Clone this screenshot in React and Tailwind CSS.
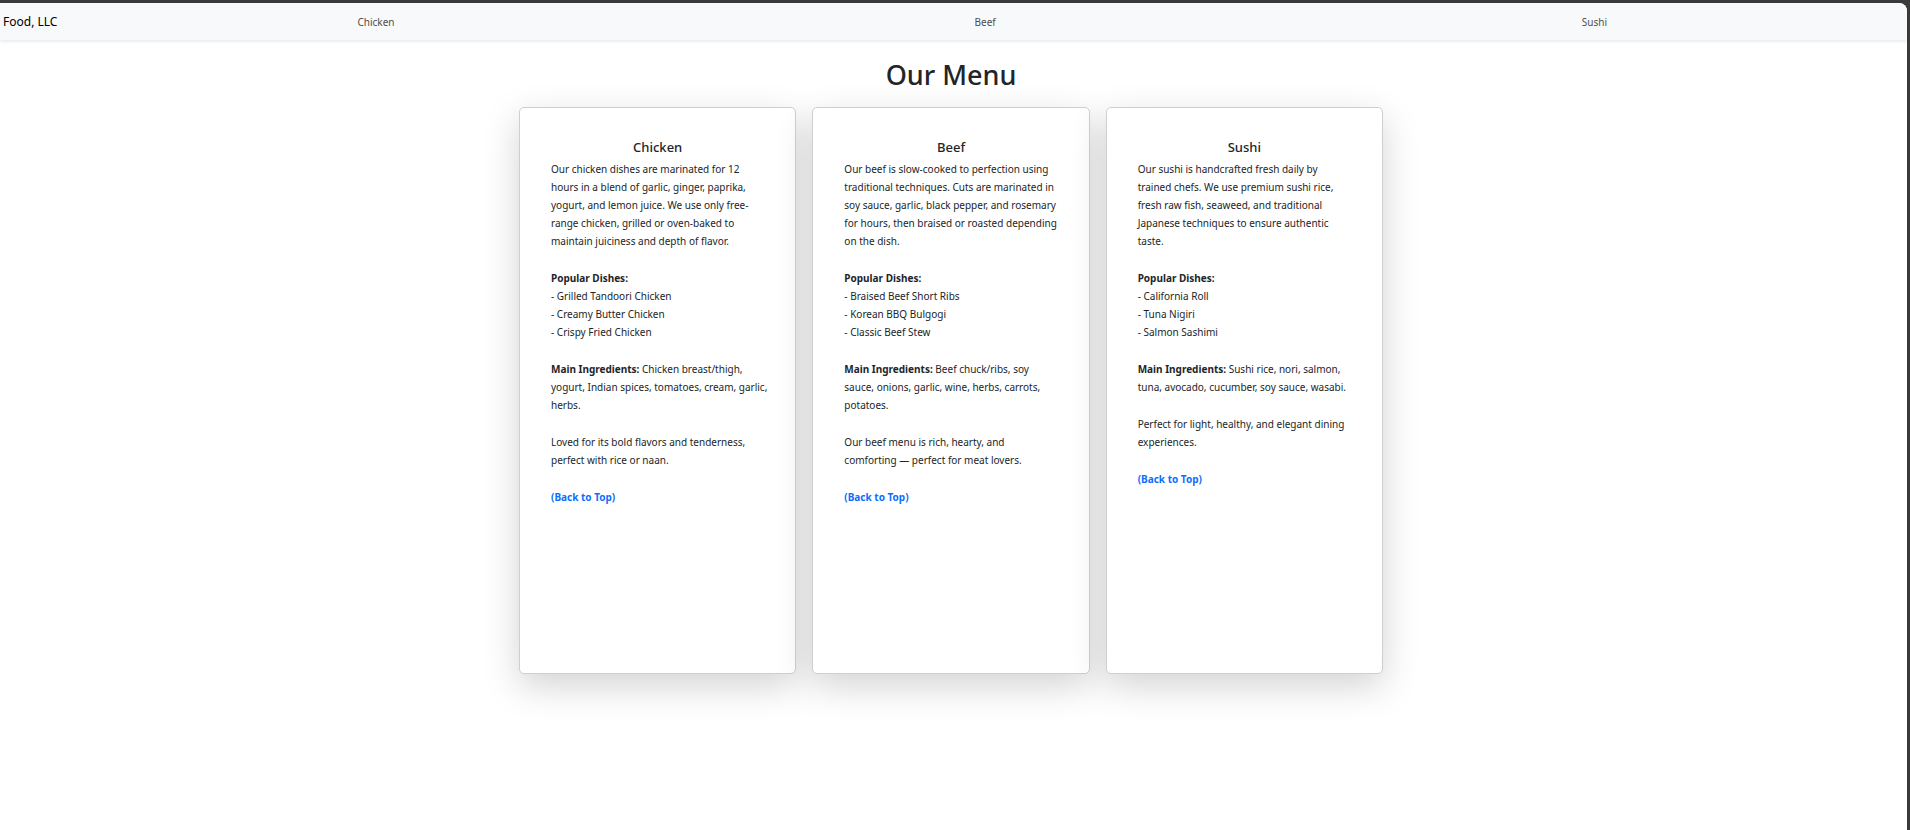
const NAV_LINKS = ["Chicken", "Beef", "Sushi"];

const MENU = [
  {
    name: "Chicken",
    intro:
      "Our chicken dishes are marinated for 12 hours\u00a0in a blend of garlic, ginger, paprika, yogurt, and lemon juice. We use only free-range chicken, grilled or oven-baked to maintain juiciness and depth of flavor.",
    dishes: ["Grilled Tandoori Chicken", "Creamy Butter Chicken", "Crispy Fried Chicken"],
    ingredients: "Chicken breast/thigh, yogurt, Indian spices, tomatoes, cream, garlic, herbs.",
    closing: "Loved for its bold flavors and tenderness, perfect with rice or naan.",
  },
  {
    name: "Beef",
    intro:
      "Our beef is slow-cooked to perfection using traditional techniques. Cuts are marinated in soy sauce, garlic, black pepper, and rosemary for hours, then braised or roasted depending on the dish.",
    dishes: ["Braised Beef Short Ribs", "Korean BBQ Bulgogi", "Classic Beef Stew"],
    ingredients: "Beef chuck/ribs, soy sauce,\u00a0onions, garlic, wine, herbs, carrots, potatoes.",
    closing: "Our beef menu is rich, hearty, and comforting\u00a0— perfect for meat lovers.",
  },
  {
    name: "Sushi",
    intro:
      "Our sushi is handcrafted fresh daily by trained\u00a0chefs. We use premium sushi rice, fresh raw fish, seaweed, and traditional Japanese techniques to ensure authentic taste.",
    dishes: ["California Roll", "Tuna Nigiri", "Salmon Sashimi"],
    ingredients: "Sushi rice, nori, salmon, tuna, avocado, cucumber, soy sauce, wasabi.",
    closing: "Perfect for light, healthy, and elegant dining experiences.",
  },
];

function Navbar() {
  return (
    <nav className="relative flex h-[37px] items-center rounded-tr-lg bg-[#f8f9fb] pr-2 pl-[3px] leading-[18px] shadow-[0_2px_3px_rgba(0,0,0,0.075)]">
      <a href="#top" className="mr-3.5 text-[12px] text-black">
        Food, LLC
      </a>
      <ul className="flex flex-1 text-[10px]">
        {NAV_LINKS.map((label) => (
          <li key={label} className="flex-1 text-center">
            <a href={`#${label.toLowerCase()}`} className="text-[#4d4e4f]">
              {label}
            </a>
          </li>
        ))}
      </ul>
    </nav>
  );
}

function MenuCard({ item }) {
  return (
    <article
      id={item.name.toLowerCase()}
      className="relative min-h-[567px] rounded-[5px] border border-[#cfcfcf] bg-white px-[25px] pt-[29px] pb-6 shadow-[0_12px_36px_rgba(0,0,0,0.175)]"
    >
      <h2 className="mb-[3px] text-center text-[13px] leading-[20px] font-medium">{item.name}</h2>
      <div className="flex flex-col gap-[19px] pl-[6px] text-[10px] leading-[18px]">
        <p>{item.intro}</p>
        <div>
          <strong className="block font-bold">Popular Dishes:</strong>
          <ul>
            {item.dishes.map((dish) => (
              <li key={dish}>- {dish}</li>
            ))}
          </ul>
        </div>
        <p>
          <strong className="font-bold">Main Ingredients:</strong> {item.ingredients}
        </p>
        <p>{item.closing}</p>
        <p>
          <a href="#top" className="font-bold text-[#0d6efd]">
            (Back to Top)
          </a>
        </p>
      </div>
    </article>
  );
}

export default function App() {
  return (
    <div
      id="top"
      className="flex min-h-screen flex-col bg-[#3a3a3a] pt-[3px] pr-[3px] font-['Noto_Sans',sans-serif] text-[#212529]"
    >
      <div className="flex-1 rounded-tr-lg bg-white">
        <Navbar />
        <main className="pr-[5px] pb-10">
          <h1 className="pt-[17px] pb-[14px] text-center text-[27px] leading-[36px] font-medium">Our Menu</h1>
          <div className="mx-auto grid max-w-[864px] grid-cols-3 gap-4">
            {MENU.map((item) => (
              <MenuCard key={item.name} item={item} />
            ))}
          </div>
        </main>
      </div>
    </div>
  );
}
